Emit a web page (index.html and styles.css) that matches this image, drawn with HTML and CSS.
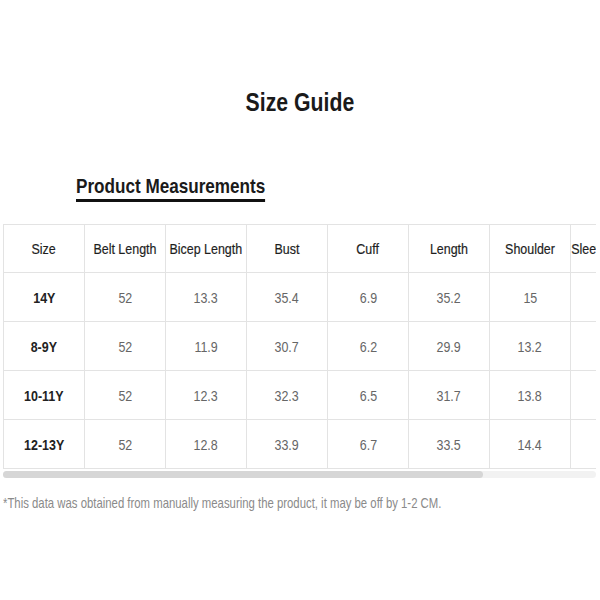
FILE: index.html
```html
<!DOCTYPE html>
<html>
<head>
<meta charset="utf-8">
<link rel="stylesheet" href="styles.css">
</head>
<body>
<div class="page">
  <h1 class="title"><span class="title-text">Size Guide</span></h1>
  <div class="section-head"><span class="section-title">Product Measurements</span></div>
  <div class="scroller">
    <table class="sizes">
      <thead>
        <tr><th><span class="t">Size</span></th><th><span class="t">Belt Length</span></th><th><span class="t">Bicep Length</span></th><th><span class="t">Bust</span></th><th><span class="t">Cuff</span></th><th><span class="t">Length</span></th><th><span class="t">Shoulder</span></th><th><span class="t">Sleeve Length</span></th><th><span class="t">Waist</span></th></tr>
      </thead>
      <tbody>
        <tr><td class="size"><span class="t">14Y</span></td><td><span class="t">52</span></td><td><span class="t">13.3</span></td><td><span class="t">35.4</span></td><td><span class="t">6.9</span></td><td><span class="t">35.2</span></td><td><span class="t">15</span></td><td><span class="t">50</span></td><td><span class="t">33</span></td></tr>
        <tr><td class="size"><span class="t">8-9Y</span></td><td><span class="t">52</span></td><td><span class="t">11.9</span></td><td><span class="t">30.7</span></td><td><span class="t">6.2</span></td><td><span class="t">29.9</span></td><td><span class="t">13.2</span></td><td><span class="t">45</span></td><td><span class="t">28</span></td></tr>
        <tr><td class="size"><span class="t">10-11Y</span></td><td><span class="t">52</span></td><td><span class="t">12.3</span></td><td><span class="t">32.3</span></td><td><span class="t">6.5</span></td><td><span class="t">31.7</span></td><td><span class="t">13.8</span></td><td><span class="t">47</span></td><td><span class="t">30</span></td></tr>
        <tr><td class="size"><span class="t">12-13Y</span></td><td><span class="t">52</span></td><td><span class="t">12.8</span></td><td><span class="t">33.9</span></td><td><span class="t">6.7</span></td><td><span class="t">33.5</span></td><td><span class="t">14.4</span></td><td><span class="t">49</span></td><td><span class="t">31.5</span></td></tr>
      </tbody>
    </table>
  </div>
  <div class="scrollbar"><div class="scrollbar-thumb"></div></div>
  <p class="note"><span class="note-text">*This data was obtained from manually measuring the product, it may be off by 1-2 CM.</span></p>
</div>
</body>
</html>
```
FILE: styles.css
```css
html, body {
  margin: 0;
  padding: 0;
  background: #ffffff;
}
.page {
  font-family: "Liberation Sans", Arial, sans-serif;
  padding-top: 87px;
}
.title {
  margin: 0;
  font-size: 25px;
  line-height: 30px;
  font-weight: bold;
  color: #1a1a1a;
  text-align: center;
}
.title-text {
  display: inline-block;
  transform: scaleX(0.85);
  transform-origin: center;
}
.section-head {
  margin-top: 57px;
  padding-left: 76px;
}
.section-title {
  display: inline-block;
  font-size: 21px;
  line-height: 24px;
  font-weight: bold;
  color: #1a1a1a;
  padding-bottom: 1px;
  border-bottom: 3px solid #111;
  transform: scaleX(0.815);
  transform-origin: left center;
}
.scroller {
  margin: 22px 4px 0 3px;
  overflow: hidden;
}
.sizes {
  border-collapse: collapse;
  table-layout: fixed;
  width: 730px;
}
.sizes th, .sizes td {
  width: 80px;
  border: 1px solid #e3e3e3;
  text-align: center;
  font-size: 15px;
  padding: 0;
  white-space: nowrap;
}
.t {
  display: inline-block;
  margin: 0 -12px;
  transform: scaleX(0.83);
  transform-origin: center;
}
.sizes th {
  height: 47px;
  font-weight: normal;
  color: #1e1e1e;
  -webkit-text-stroke: 0.2px #1e1e1e;
}
.sizes td {
  height: 48px;
  color: #666;
}
.sizes td.size {
  font-weight: bold;
  color: #222;
}
.scrollbar {
  margin: 2px 4px 0 3px;
  height: 7px;
  background: #f2f2f2;
  border-radius: 4px;
}
.scrollbar-thumb {
  width: 81%;
  height: 100%;
  background: #d6d6d6;
  border-radius: 4px;
}
.note {
  margin: 16px 0 0 3px;
  font-size: 15px;
  color: #8a8a8a;
  white-space: nowrap;
}
.note-text {
  display: inline-block;
  transform: scaleX(0.757);
  transform-origin: left center;
}
```
